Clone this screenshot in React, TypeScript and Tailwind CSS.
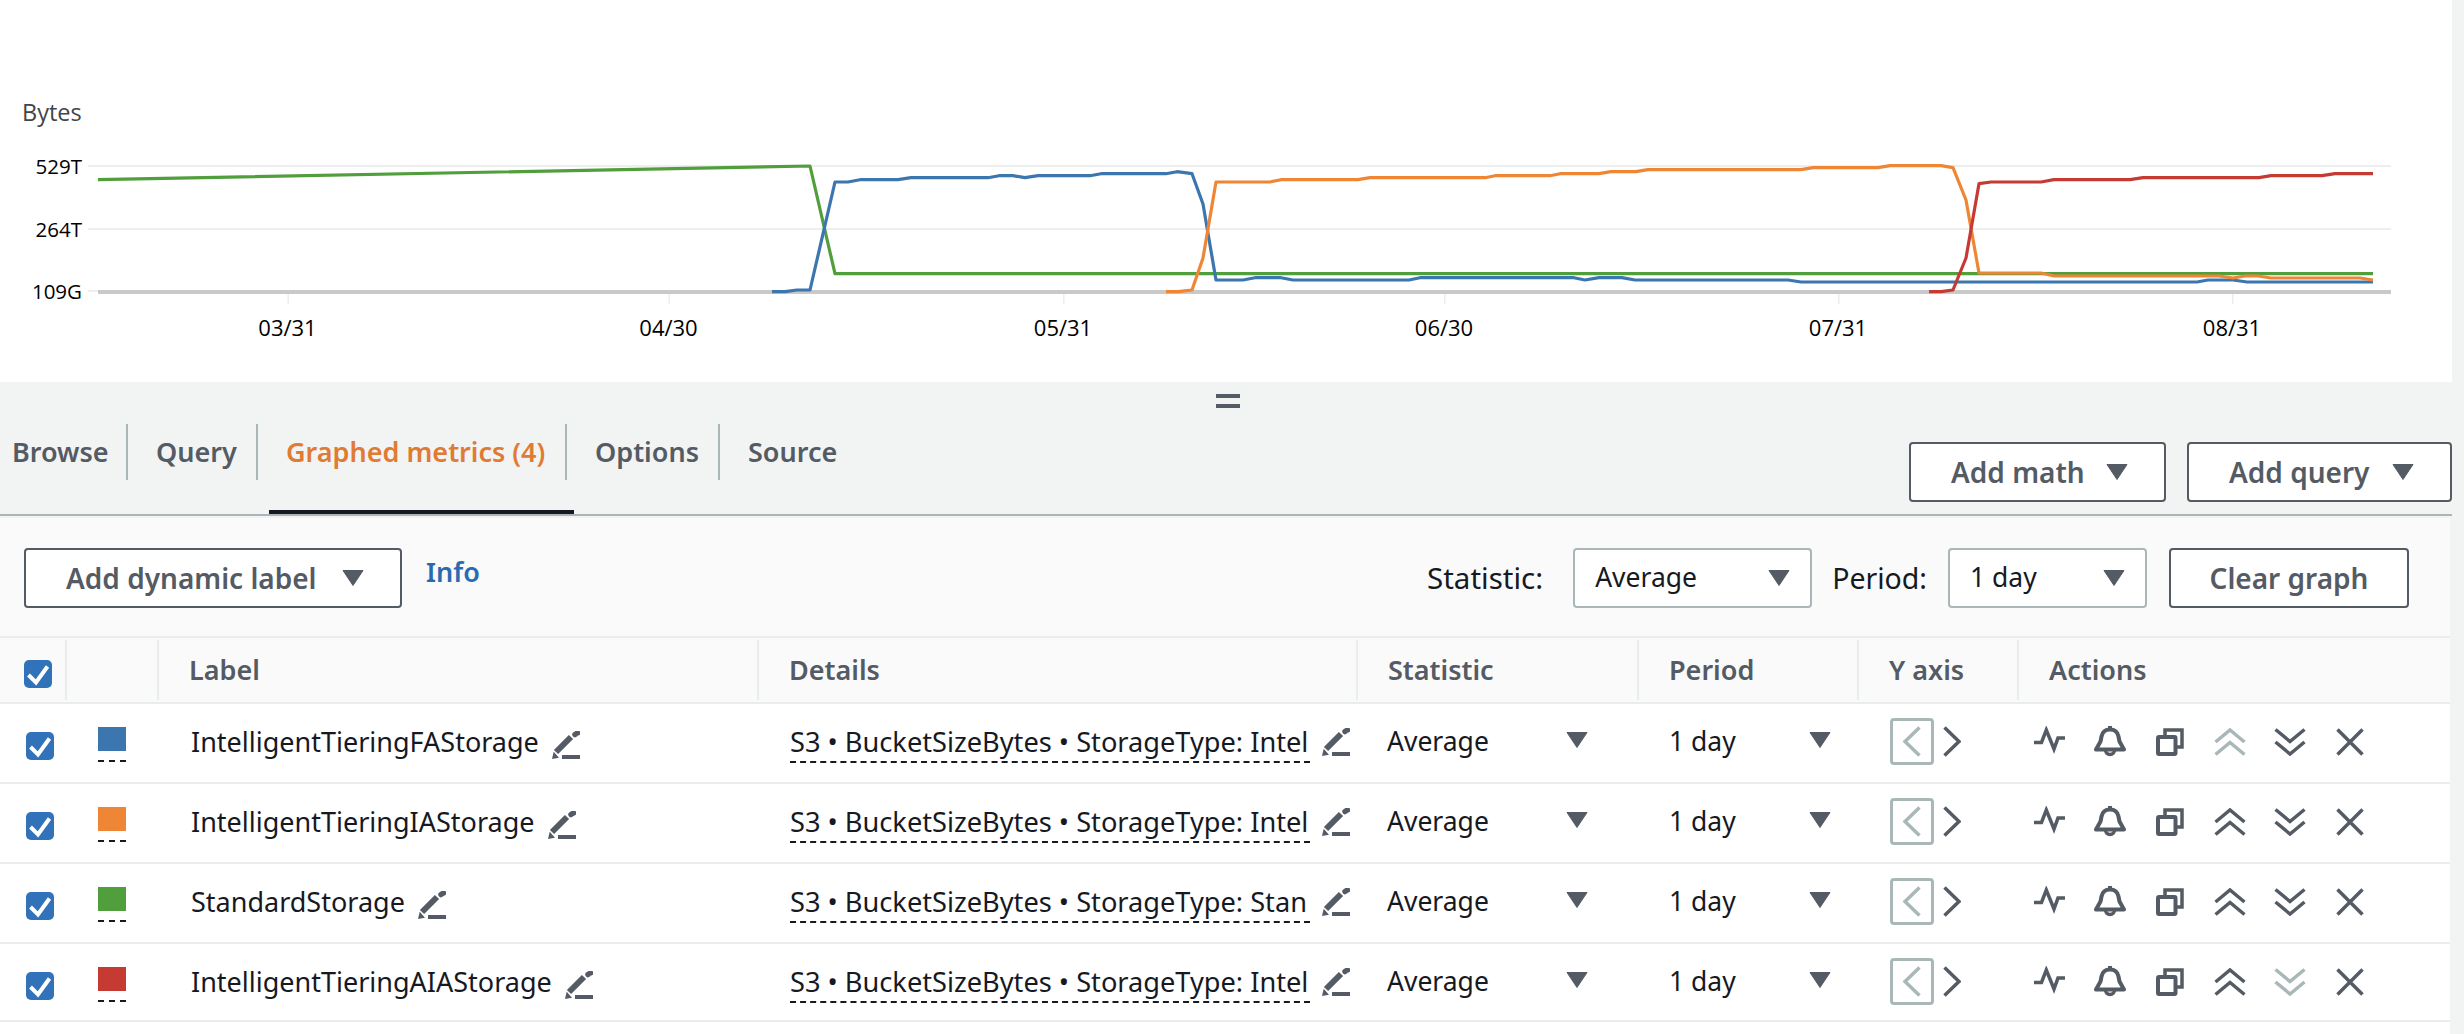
const lines: { color: string; points: [number, number][] }[] = [
  {
    color: "#519e3d",
    points: [[98, 179.7], [810, 166], [835, 273.7], [2373, 273.7]],
  },
  {
    color: "#3b76af",
    points: [
      [772, 291.7], [785, 291.7], [797, 290], [810, 290], [835, 182], [848, 182], [860, 179.7], [898, 179.7],
      [911, 177.7], [988, 177.7], [999, 175.7], [1013, 175.7], [1025, 177.7], [1038, 175.7], [1090, 175.7],
      [1101, 173.7], [1166, 173.7], [1177, 171.7], [1192, 173.7], [1203, 204], [1216, 280], [1243, 280],
      [1255, 277.7], [1281, 277.7], [1293, 280], [1409, 280], [1420, 277.7], [1574, 277.7], [1585, 280],
      [1599, 277.7], [1622, 277.7], [1635, 280], [1788, 280], [1801, 282], [2197, 282], [2208, 280],
      [2233, 280], [2247, 282], [2373, 282],
    ],
  },
  {
    color: "#ef8636",
    points: [
      [1166, 291.7], [1178, 291.7], [1192, 290], [1203, 258], [1216, 182], [1270, 182], [1281, 179.7],
      [1358, 179.7], [1370, 177.7], [1485, 177.7], [1495, 175.7], [1550, 175.7], [1560, 173.7], [1599, 173.7],
      [1611, 171.7], [1636, 171.7], [1648, 169.7], [1801, 169.7], [1813, 167.7], [1878, 167.7], [1890, 165.7],
      [1941, 165.7], [1953, 167.7], [1966, 200], [1979, 273], [2041, 273], [2054, 276], [2219, 276], [2233, 278],
      [2245, 276], [2258, 276], [2271, 278], [2360, 278], [2373, 280],
    ],
  },
  {
    color: "#c53a33",
    points: [
      [1929, 291.7], [1941, 291.7], [1953, 290], [1966, 258], [1979, 183.7], [1991, 182], [2041, 182],
      [2054, 179.7], [2130, 179.7], [2143, 177.7], [2259, 177.7], [2271, 175.7], [2322, 175.7], [2335, 173.7],
      [2373, 173.7],
    ],
  },
];

const xTicks = [
  { x: 287.5, label: "03/31" },
  { x: 668.5, label: "04/30" },
  { x: 1063, label: "05/31" },
  { x: 1444, label: "06/30" },
  { x: 1838, label: "07/31" },
  { x: 2232, label: "08/31" },
];

const rows = [
  { label: "IntelligentTieringFAStorage", color: "bg-[#3b76af]", details: "S3 • BucketSizeBytes • StorageType: Intel", upOff: true, downOff: false, height: "h-[80px]" },
  { label: "IntelligentTieringIAStorage", color: "bg-[#ef8636]", details: "S3 • BucketSizeBytes • StorageType: Intel", upOff: false, downOff: false, height: "h-[80px]" },
  { label: "StandardStorage", color: "bg-[#519e3d]", details: "S3 • BucketSizeBytes • StorageType: Stan", upOff: false, downOff: false, height: "h-[80px]" },
  { label: "IntelligentTieringAIAStorage", color: "bg-[#c53a33]", details: "S3 • BucketSizeBytes • StorageType: Intel", upOff: false, downOff: true, height: "h-[78px]" },
];

function Caret({ className = "" }: { className?: string }) {
  return (
    <svg width="22" height="16" viewBox="0 0 22 16" className={"shrink-0 " + className}>
      <path d="M1 0.5 H21 L11 15.5 Z" fill="#545b64" stroke="#545b64" strokeWidth="1" strokeLinejoin="round" />
    </svg>
  );
}

function Checkbox() {
  return (
    <span className="block h-[28px] w-[28px] rounded-[5px] bg-[#3272b8]">
      <svg width="28" height="28" viewBox="0 0 28 28" className="block">
        <path d="M4.5 15 L12 22.5 L23.5 6.5" fill="none" stroke="#ffffff" strokeWidth="4" />
      </svg>
    </span>
  );
}

function Pencil({ className = "" }: { className?: string }) {
  return (
    <svg width="28" height="28" viewBox="0 0 28 28" className={"shrink-0 " + className}>
      <path d="M0 28 L1.7 20.7 L7 26.7 Z" fill="#545b64" />
      <path d="M4 21 L19 6" stroke="#545b64" strokeWidth="6" />
      <path d="M23 3.5 L25.5 2" stroke="#545b64" strokeWidth="5.5" strokeLinecap="round" />
      <rect x="10" y="24" width="18" height="4" fill="#545b64" />
    </svg>
  );
}

function DropButton({ label, className = "" }: { label: string; className?: string }) {
  return (
    <button className={"flex h-[60px] items-center justify-between rounded-[4px] border-2 border-[#545b64] bg-white text-[28px] font-semibold text-[#545b64] " + className}>
      <span>{label}</span>
      <Caret />
    </button>
  );
}

function SelectBox({ label, className = "" }: { label: string; className?: string }) {
  return (
    <div className={"flex h-[60px] items-center justify-between rounded-[4px] border-2 border-[#aab7b8] bg-white pl-[20px] pr-[20px] text-[26.5px] text-[#16191f] " + className}>
      <span>{label}</span>
      <Caret />
    </div>
  );
}

function RowIcon({ w, h, off, className = "", children }: { w: number; h: number; off?: boolean; className?: string; children: React.ReactNode }) {
  return (
    <svg
      width={w}
      height={h}
      viewBox={`0 0 ${w} ${h}`}
      fill="none"
      stroke={off ? "#aab7b8" : "#545b64"}
      strokeWidth="3.5"
      className={"shrink-0 " + className}
    >
      {children}
    </svg>
  );
}

const colHead = "flex h-[60px] items-center border-l-2 border-[#eaeded] pl-[30px]";
const grid = "grid grid-cols-[65px_92px_600px_599px_281px_220px_160px_1fr]";

export default function App() {
  return (
    <div className="min-h-[1034px] w-[2464px] overflow-hidden bg-[#f2f3f3] font-['Noto_Sans',sans-serif]">
      {/* Graph */}
      <div className="h-[382px] w-[2452px] bg-white">
        <svg width="2452" height="382" viewBox="0 0 2452 382" className="block font-['Open_Sans',sans-serif]">
          <text x="22" y="121" fontSize="23.5" fill="#444444">Bytes</text>
          <rect x="88" y="165" width="2303" height="2" fill="#eeeeee" />
          <rect x="88" y="228" width="2303" height="2" fill="#eeeeee" />
          <rect x="88" y="290" width="2303" height="2" fill="#eeeeee" />
          <rect x="98" y="290" width="2293" height="4" fill="#c9c9c9" />
          <text x="82" y="174" fontSize="20.5" fill="#000000" textAnchor="end">529T</text>
          <text x="82" y="237" fontSize="20.5" fill="#000000" textAnchor="end">264T</text>
          <text x="82" y="299" fontSize="20.5" fill="#000000" textAnchor="end">109G</text>
          {xTicks.map((t) => (
            <g key={t.label}>
              <rect x={t.x} y="294" width="1.5" height="10" fill="#eeeeee" />
              <text x={t.x} y="336" fontSize="22" fill="#000000" textAnchor="middle">{t.label}</text>
            </g>
          ))}
          {lines.map((l) => (
            <polyline
              key={l.color}
              points={l.points.map((p) => p.join(",")).join(" ")}
              fill="none"
              stroke={l.color}
              strokeWidth="3.2"
              strokeLinejoin="round"
            />
          ))}
        </svg>
      </div>

      {/* Tabs */}
      <div className="relative h-[134px] w-[2452px] border-b-2 border-[#aab7b8]">
        <div className="absolute left-[1216px] top-[12px] flex flex-col gap-[6px]">
          <div className="h-[4px] w-[24px] bg-[#545b64]" />
          <div className="h-[4px] w-[24px] bg-[#545b64]" />
        </div>
        <div className="flex h-full items-start justify-between pt-[42px]">
          <div className="flex text-[27px] font-semibold text-[#545b64]">
            <div className="flex h-[56px] w-[128px] items-center border-r-2 border-[#aab7b8] pl-[12px]">Browse</div>
            <div className="flex h-[56px] w-[130px] items-center border-r-2 border-[#aab7b8] pl-[28px]">Query</div>
            <div className="relative flex h-[56px] w-[309px] items-center border-r-2 border-[#aab7b8] pl-[28px] text-[#e07b33]">
              Graphed metrics (4)
              <div className="absolute left-[11px] top-[86px] h-[4px] w-[305px] bg-[#16191f]" />
            </div>
            <div className="flex h-[56px] w-[153px] items-center border-r-2 border-[#aab7b8] pl-[28px]">Options</div>
            <div className="flex h-[56px] items-center pl-[28px]">Source</div>
          </div>
          <div className="mt-[18px] flex gap-[21px]">
            <DropButton label="Add math" className="w-[257px] pl-[40px] pr-[36px]" />
            <DropButton label="Add query" className="w-[265px] pl-[40px] pr-[36px]" />
          </div>
        </div>
      </div>

      {/* Toolbar */}
      <div className="mt-[2px] flex h-[120px] w-[2450px] items-start border-b-2 border-[#eaeded] bg-[#fafafa] pl-[24px] pt-[30px]">
        <DropButton label="Add dynamic label" className="w-[378px] pl-[40px] pr-[36px]" />
        <span className="ml-[24px] mt-[2px] text-[27px] font-semibold leading-[44px] text-[#2a6ab1]">Info</span>
        <span className="ml-auto flex h-[60px] items-center text-[29.5px] text-[#16191f]">Statistic:</span>
        <SelectBox label="Average" className="ml-[30px] w-[239px]" />
        <span className="ml-[20px] flex h-[60px] items-center text-[28.5px] text-[#16191f]">Period:</span>
        <SelectBox label="1 day" className="ml-[21px] w-[199px]" />
        <button className="ml-[22px] mr-[41px] h-[60px] w-[240px] rounded-[4px] border-2 border-[#545b64] bg-white text-[28px] font-semibold text-[#545b64]">Clear graph</button>
      </div>

      {/* Metric table */}
      <div className="w-[2450px] bg-white">
        <div className={grid + " items-center border-b-2 border-[#eaeded] bg-[#fafafa] py-[2px] text-[27px] font-semibold text-[#545b64]"}>
          <div className="mt-[8px] pl-[24px]"><Checkbox /></div>
          <div className={colHead} />
          <div className={colHead}>Label</div>
          <div className={colHead}>Details</div>
          <div className={colHead}>Statistic</div>
          <div className={colHead}>Period</div>
          <div className={colHead}>Y axis</div>
          <div className={colHead}>Actions</div>
        </div>
        {rows.map((r) => (
          <div key={r.label} className={grid + " border-b-2 border-[#eaeded] text-[27px] text-[#16191f] " + r.height}>
            <div className="pl-[26px] pt-[28px]"><Checkbox /></div>
            <div className="pl-[33px] pt-[23px]">
              <div className={"h-[24px] w-[28px] " + r.color} />
              <div className="mt-[9px] h-0 w-[28px] border-t-2 border-dashed border-[#16191f]" />
            </div>
            <div className="flex items-center gap-[13px] self-start pl-[34px] pt-[19px]">
              <span className="leading-[38px]">{r.label}</span>
              <Pencil className="mt-[6px]" />
            </div>
            <div className="flex items-start gap-[12px] pl-[33px] pt-[19px]">
              <span className="w-[520px] overflow-hidden whitespace-nowrap border-b-2 border-dashed border-[#16191f] pb-[1px] text-[27.2px] leading-[37px]">{r.details}</span>
              <Pencil className="mt-[5px]" />
            </div>
            <div className="flex items-start justify-between pl-[31px] pr-[49px] pt-[19px]">
              <span className="text-[26.5px] leading-[36px]">Average</span>
              <Caret className="mt-[9px]" />
            </div>
            <div className="flex items-start justify-between pl-[32px] pr-[26px] pt-[19px]">
              <span className="text-[26.5px] leading-[36px]">1 day</span>
              <Caret className="mt-[9px]" />
            </div>
            <div className="flex items-start pl-[33px] pt-[14px]">
              <div className="flex h-[47px] w-[44px] items-center justify-center rounded-[4px] border-[3px] border-[#aab7b8] bg-white">
                <RowIcon w={18} h={31} off><path d="M16.5 1.5 L2 15.5 L16.5 29.5" /></RowIcon>
              </div>
              <div className="ml-[9px] mt-[8px]">
                <RowIcon w={18} h={31}><path d="M1.5 1.5 L16 15.5 L1.5 29.5" /></RowIcon>
              </div>
            </div>
            <div className="flex items-start pl-[17px] pt-[22px]">
              <RowIcon w={32} h={32}>
                <path d="M0 16.5 H7.5 L12.3 4 L20 23 L24 12 H31" />
              </RowIcon>
              <RowIcon w={32} h={32} className="ml-[28px]">
                <path d="M2 23.5 H30 L25.5 15.5 L24.5 10.5 C23.5 5.5 20 3.5 16 3.5 C12 3.5 8.5 5.5 7.5 10.5 L6.5 15.5 Z" strokeWidth="4" strokeLinejoin="round" />
                <path d="M16 0 V3" strokeWidth="4" />
                <path d="M11.5 24 A4.5 4.5 0 0 0 20.5 24" />
              </RowIcon>
              <RowIcon w={28} h={28} className="ml-[30px] mt-[2px]">
                <rect x="2" y="9" width="17.5" height="17" rx="1" strokeWidth="4" />
                <path d="M9 8 V2 H26 V19 H20" strokeWidth="3.5" />
              </RowIcon>
              <RowIcon w={32} h={28} off={r.upOff} className="ml-[30px] mt-[2px]">
                <path d="M1.5 14 L16 2 L30.5 14" />
                <path d="M1.5 26.5 L16 14.5 L30.5 26.5" />
              </RowIcon>
              <RowIcon w={32} h={28} off={r.downOff} className="ml-[28px] mt-[2px]">
                <path d="M1.5 1.5 L16 13.5 L30.5 1.5" />
                <path d="M1.5 14 L16 26 L30.5 14" />
              </RowIcon>
              <RowIcon w={28} h={28} className="ml-[30px] mt-[2px]">
                <path d="M1.5 1.5 L26.5 26.5 M26.5 1.5 L1.5 26.5" />
              </RowIcon>
            </div>
          </div>
        ))}
        <div className="h-[12px]" />
      </div>
    </div>
  );
}
